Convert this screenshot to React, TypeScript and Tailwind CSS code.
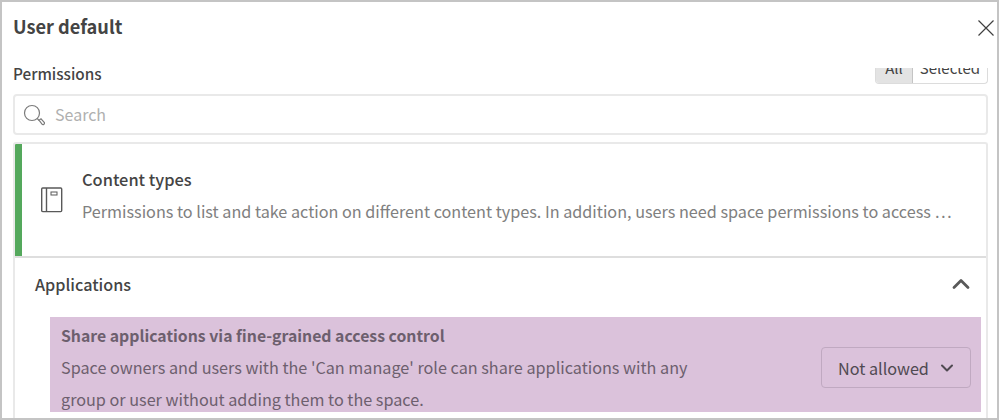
import { ChevronDown, ChevronUp } from 'lucide-react';

const FONT = "font-['Noto_Sans_CJK_SC','Source_Sans_Pro',sans-serif]";

const App = () => {
  return (
    <div className={`${FONT} w-[999px] h-[420px] overflow-hidden bg-white border-2 border-b-[2px] border-r-[2px] border-[#c4c4c4] text-[#444444]`}>
      <div className="h-[416px] flex flex-col pl-[11px] pr-[9px]">
        {/* header */}
        <div className="h-[52px] shrink-0 flex items-center justify-between pb-[5px]">
          <h1 className="text-[18.2px] leading-[26px] font-semibold">User default</h1>
          <button className="mr-[-7px] mt-[4px] text-[#404040]">
            <svg width="18" height="18" viewBox="0 0 18 18" fill="none" stroke="currentColor" strokeWidth="1.2">
              <path d="M1.5 1.5 L16.5 16.5 M16.5 1.5 L1.5 16.5" />
            </svg>
          </button>
        </div>

        {/* permissions + toggle */}
        <div className="h-[30px] shrink-0 flex items-start justify-between">
          <span className="text-[15.3px] leading-[20px] mt-[9px] font-medium">Permissions</span>
          <div className="mt-[14px] h-[16px] w-[113px] flex overflow-hidden rounded-b-[4px] border border-t-0 border-[#dcdcdc] text-[15px] leading-[22px]">
            <div className="w-[37px] bg-[#e3e3e3] border-r border-[#c4c4c4] flex justify-center">
              <span className="mt-[-11px]">All</span>
            </div>
            <div className="flex-1 flex justify-center">
              <span className="mt-[-11px]">Selected</span>
            </div>
          </div>
        </div>

        {/* search */}
        <div className="mt-[10px] h-[41px] shrink-0 flex items-center rounded-[4px] border-2 border-[#e9e9e9] pl-[8px]">
          <svg width="22" height="24" viewBox="0 0 22 24" fill="none" stroke="#7b7b7b" strokeWidth="1.2">
            <circle cx="9" cy="10" r="7.5" />
            <path d="M14.2 15.5 L16.3 17.6" />
            <path d="M16 17.2 L18 15.8 L21.4 19.6 Q21.8 20.4 20.8 21.4 Q19.8 22 19.2 21.4 Z" />
          </svg>
          <span className="ml-[10px] mt-[-1px] text-[16px] leading-[22px] text-[#b0b0b0]">Search</span>
        </div>

        {/* card */}
        <div className="mt-[7px] flex-1 min-h-0 rounded-t-[3px] border-x-2 border-t-2 border-[#e9e9e9] flex flex-col overflow-hidden">
          <div className="h-[114px] shrink-0 flex border-b-2 border-[#dedede]">
            <div className="w-[8px] ml-[-1px] bg-[#54a85c] shrink-0" />
            <div className="w-[19px] shrink-0" />
            <div className="w-[22px] shrink-0 flex items-center">
              <svg width="22" height="26" viewBox="0 0 22 26" fill="none" stroke="#595959" strokeWidth="1.4">
                <rect x="0.7" y="1" width="20" height="23.6" rx="1" />
                <path d="M5.5 1 V24.6" />
                <rect x="10" y="5" width="6" height="3" strokeWidth="1" />
              </svg>
            </div>
            <div className="ml-[19px] flex-1 pt-[24px]">
              <div className="text-[16.4px] leading-[22px] font-medium">Content types</div>
              <div className="mt-[10px] text-[16.2px] leading-[22px] text-[#808080] whitespace-nowrap">
                Permissions to list and take action on different content types. In addition, users need space permissions to access …
              </div>
            </div>
          </div>

          {/* applications */}
          <div className="flex-1 min-h-0 pl-[20px] pr-[5px] flex flex-col">
            <div className="h-[59px] shrink-0 flex items-center justify-between pb-[7px]">
              <span className="text-[16.2px] leading-[22px] font-medium">Applications</span>
              <ChevronUp className="w-[28px] h-[28px] mr-[6px] text-[#595959]" strokeWidth={2.4} />
            </div>
            <div className="ml-[15px] h-[95px] shrink-0 bg-[#dbc2db] pl-[11px] pr-[10px] flex items-start justify-between">
              <div className="w-[660px] pt-[8px] text-[#6d5f6e]">
                <div className="text-[15.8px] leading-[22px] font-semibold">Share applications via fine-grained access control</div>
                <div className="mt-[4px] text-[16.2px] leading-[32px]">
                  Space owners and users with the 'Can manage' role can share applications with any group or user without adding them to the space.
                </div>
              </div>
              <div className="h-[41px] w-[150px] flex items-center justify-between rounded-[4px] border border-[#c0a9c1] pl-[16px] pr-[15px] mt-[30px]">
                <span className="text-[16.2px] leading-[22px] text-[#504a52]">Not allowed</span>
                <ChevronDown className="w-[20px] h-[20px] mr-[-2px] text-[#504a52]" strokeWidth={2.4} />
              </div>
            </div>
          </div>
        </div>
      </div>
    </div>
  );
};

export default App;
